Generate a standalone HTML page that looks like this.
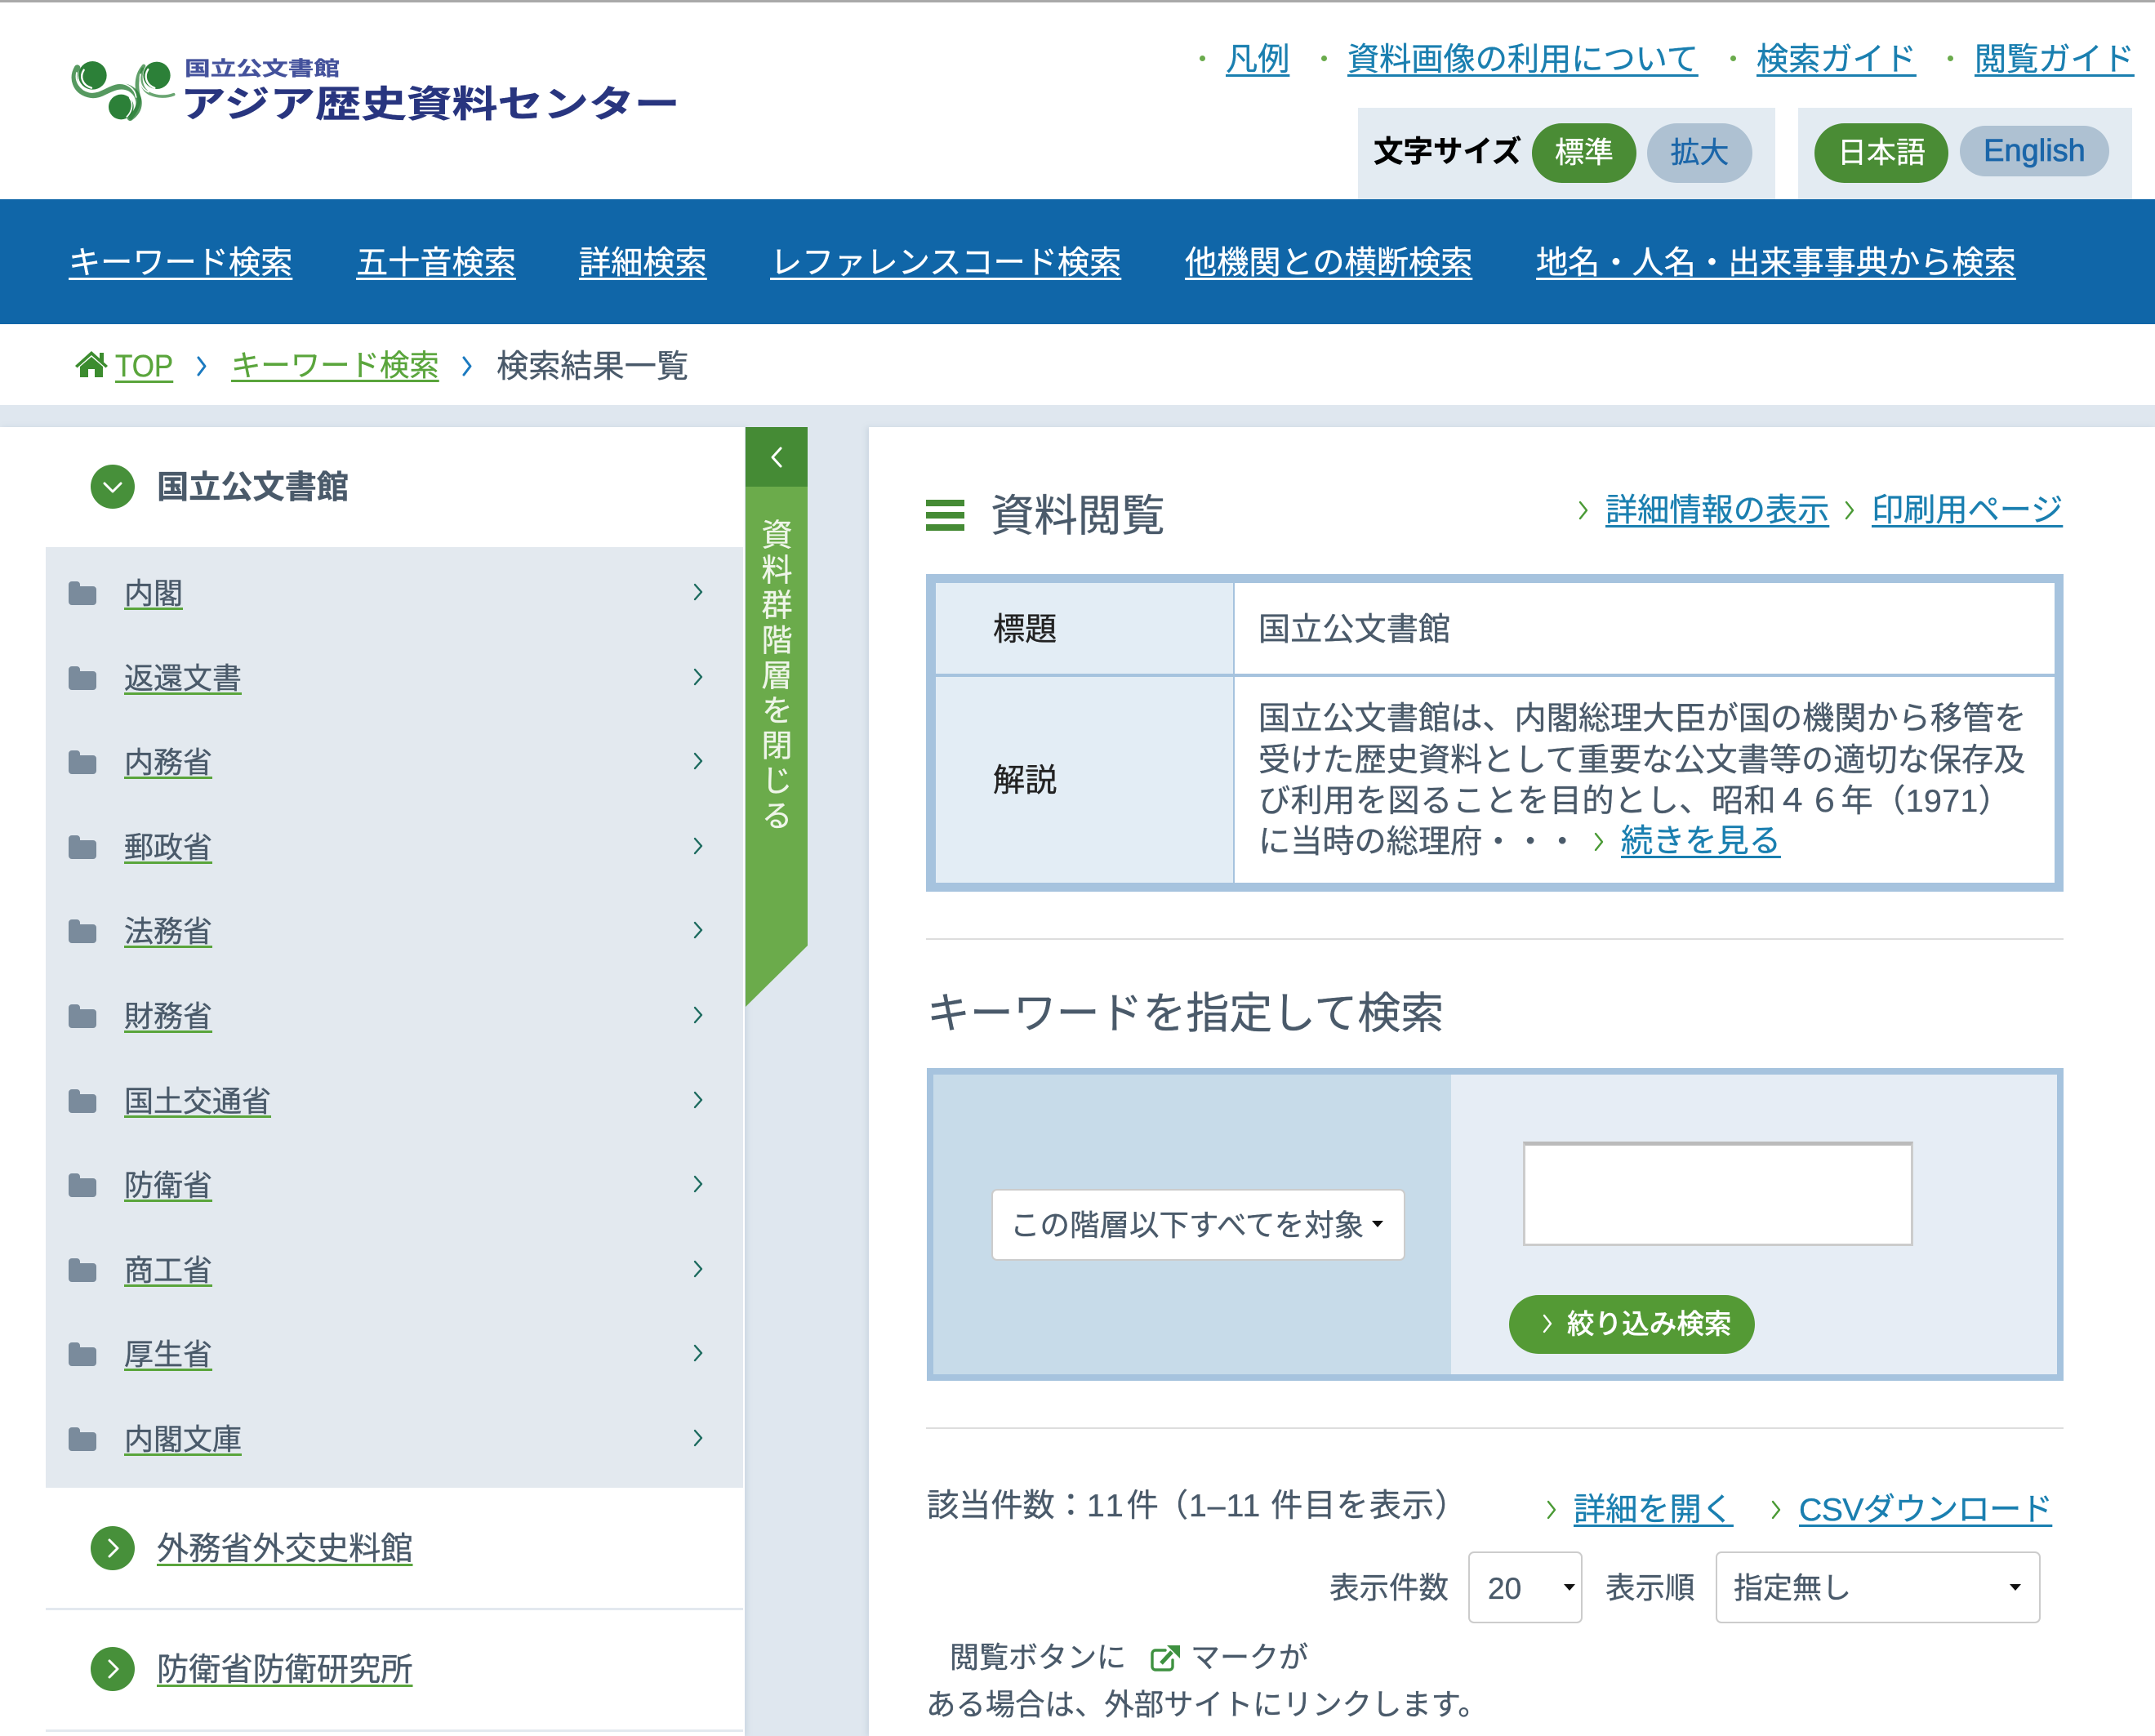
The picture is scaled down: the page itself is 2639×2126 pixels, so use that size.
<!DOCTYPE html>
<html lang="ja"><head><meta charset="utf-8"><title>アジア歴史資料センター</title>
<style>
*{box-sizing:border-box}
html,body{margin:0;padding:0}
body{position:relative;width:2639px;height:2126px;overflow:hidden;background:#dfe7ef;font-family:"Liberation Sans","Noto Sans CJK JP",sans-serif;color:#4a5a6a;-webkit-text-stroke:.35px}
.a,.t,svg{position:absolute}
.t{white-space:nowrap;line-height:1;font-size:39.2px}
a{color:inherit;text-decoration:underline;text-decoration-thickness:3px;text-underline-offset:5px;text-decoration-skip-ink:none}
.l{color:#1a7fb0}
.n{color:#fff;top:303px}
.g{text-decoration-color:#5aa53c}
.p{position:absolute;border-radius:37px;text-align:center;line-height:71px;font-size:36px}
.row{position:absolute;left:56px;width:854px;height:104px;top:calc(670px + var(--i)*103.6px)}
.row .t{left:96px;top:39px;font-size:36px}
.row svg{left:28px;top:41px}
.row svg+svg{left:793px;top:44px}
.c{fill:none;stroke-linecap:round;stroke-linejoin:round}
.sel{position:absolute;background:#fff;border:2px solid #ccc;border-radius:7px}
.car{position:absolute;width:0;height:0;border-left:7px solid transparent;border-right:7px solid transparent;border-top:8px solid #111}
</style></head><body>
<div class="a" style="left:0;top:0;width:2639px;height:3px;background:#a9a9a9"></div>
<div class="a" style="left:0;top:3px;width:2639px;height:241px;background:#fff"></div>

<svg style="left:80px;top:65px" width="150" height="90" viewBox="0 0 450 270">
<g fill="none" stroke="#2c8038" stroke-linecap="round">
<path d="M44 54C22 92 36 138 84 152C124 164 152 132 192 124C232 116 266 142 270 178C272 204 258 224 238 238" stroke-width="22" opacity=".8"/>
<path d="M288 48C258 82 260 128 272 170C268 198 256 218 240 238" stroke-width="14" opacity=".75"/>
<path d="M284 58C272 92 278 134 312 150C340 162 372 162 398 152" stroke-width="11" opacity=".7"/>
</g>
<g fill="none" stroke="#fff" stroke-linecap="round">
<path d="M42 72C34 104 56 136 88 143C126 150 152 118 192 112C226 108 256 130 260 162" stroke-width="5"/>
<path d="M276 78C270 106 280 132 306 143" stroke-width="5"/>
</g>
<circle cx="100" cy="82" r="52" fill="#2c8038"/>
<circle cx="336" cy="82" r="50" fill="#2c8038"/>
<circle cx="205" cy="198" r="46" fill="#2c8038"/>
<g fill="none" stroke="#fff" stroke-linecap="round">
<path d="M68 62C52 86 62 118 96 128" stroke-width="7"/>
<path d="M304 60C288 84 296 116 328 128" stroke-width="7"/>
<path d="M236 164C252 188 244 216 226 234" stroke-width="5"/>
</g>
</svg>
<div class="t" style="left:226px;top:73px;font-size:24px;font-weight:700;color:#44529c;transform:scaleX(1.32);transform-origin:left top">国立公文書館</div>
<div class="t" style="left:221px;top:105px;font-size:45px;font-weight:700;color:#28357f;transform:scaleX(1.24);transform-origin:left top">アジア歴史資料センター</div>

<div class="a" style="left:1469px;top:68px;width:7px;height:7px;border-radius:50%;background:#6aab4c"></div>
<div class="t" style="left:1501px;top:54px"><a class="l" href="#">凡例</a></div>
<div class="a" style="left:1618px;top:68px;width:7px;height:7px;border-radius:50%;background:#6aab4c"></div>
<div class="t" style="left:1650px;top:54px;font-size:39.2px"><a class="l" href="#">資料画像の利用について</a></div>
<div class="a" style="left:2119px;top:68px;width:7px;height:7px;border-radius:50%;background:#6aab4c"></div>
<div class="t" style="left:2151px;top:54px"><a class="l" href="#">検索ガイド</a></div>
<div class="a" style="left:2385px;top:68px;width:7px;height:7px;border-radius:50%;background:#6aab4c"></div>
<div class="t" style="left:2418px;top:54px"><a class="l" href="#">閲覧ガイド</a></div>

<div class="a" style="left:1663px;top:132px;width:511px;height:112px;background:#e3ebf2"></div>
<div class="a" style="left:2202px;top:132px;width:409px;height:112px;background:#e3ebf2"></div>
<div class="t" style="left:1682px;top:168px;font-size:36.5px;font-weight:700;color:#000">文字サイズ</div>
<div class="p" style="left:1876px;top:151px;width:128px;height:73px;background:#4a8c35;color:#fff">標準</div>
<div class="p" style="left:2017px;top:151px;width:129px;height:73px;background:#aec1d2;color:#1b66a9">拡大</div>
<div class="p" style="left:2222px;top:151px;width:164px;height:73px;background:#4a8c35;color:#fff">日本語</div>
<div class="p" style="left:2400px;top:154px;width:183px;height:62px;background:#aec1d2;color:#1b66a9;line-height:62px;font-size:38px;-webkit-text-stroke:.8px">English</div>

<div class="a" style="left:0;top:244px;width:2639px;height:153px;background:#1066a8"></div>
<div class="t n" style="left:84px"><a href="#">キーワード検索</a></div>
<div class="t n" style="left:436px"><a href="#">五十音検索</a></div>
<div class="t n" style="left:709px"><a href="#">詳細検索</a></div>
<div class="t n" style="left:943px"><a href="#">レファレンスコード検索</a></div>
<div class="t n" style="left:1451px"><a href="#">他機関との横断検索</a></div>
<div class="t n" style="left:1881px"><a href="#">地名・人名・出来事事典から検索</a></div>

<div class="a" style="left:0;top:397px;width:2639px;height:99px;background:#fff"></div>
<svg style="left:92px;top:429px" width="40" height="34" viewBox="0 0 40 34"><path d="M20 1L30 10V3H35V14.5L40 19L37.5 21.5L20 6L2.5 21.5L0 19Z" fill="#3c8c2f"/><path d="M6 20L20 8L34 20V33H24V23H16V33H6Z" fill="#3c8c2f"/></svg>
<div class="t" style="left:141px;top:430px;font-size:38px;color:#5aa53c;transform:scaleX(.92);transform-origin:left top"><a href="#">TOP</a></div>
<svg class="c" style="left:240px;top:435px" width="14" height="27" viewBox="0 0 14 27"><path d="M3 3L11 13.5L3 24" stroke="#1b7ac0" stroke-width="3"/></svg>
<div class="t" style="left:283px;top:430px;font-size:36.4px;color:#5aa53c"><a href="#">キーワード検索</a></div>
<svg class="c" style="left:565px;top:435px" width="14" height="27" viewBox="0 0 14 27"><path d="M3 3L11 13.5L3 24" stroke="#1b7ac0" stroke-width="3"/></svg>
<div class="t" style="left:608px;top:430px">検索結果一覧</div>

<div class="a" style="left:0;top:523px;width:912px;height:1603px;background:#fff;box-shadow:3px 0 6px rgba(150,170,190,.25)"></div>
<div class="a" style="left:1064px;top:523px;width:1575px;height:1603px;background:#fff;box-shadow:-3px 0 6px rgba(150,170,190,.25)"></div>

<div class="a" style="left:913px;top:523px;width:76px;height:710px;background:#6bab4b;clip-path:polygon(0 0,100% 0,100% 635px,0 100%)"></div>
<div class="a" style="left:913px;top:523px;width:76px;height:73px;background:#458b35"></div>
<svg class="c" style="left:940px;top:545px" width="22" height="30" viewBox="0 0 22 30"><path d="M16 4L6 15L16 26" stroke="#fff" stroke-width="3"/></svg>
<div class="a" style="left:928px;top:635px;font-size:38px;line-height:38px;letter-spacing:5px;writing-mode:vertical-rl;color:#eef5e8;white-space:nowrap">資料群階層を閉じる</div>

<svg style="left:111px;top:569px" width="54" height="54" viewBox="0 0 54 54"><circle cx="27" cy="27" r="27" fill="#47903a"/><path class="c" d="M17 23L27 33L37 23" stroke="#fff" stroke-width="3" style="position:static"/></svg>
<div class="t" style="left:192px;top:578px;font-weight:700">国立公文書館</div>

<div class="a" style="left:56px;top:670px;width:854px;height:1152px;background:#e3e9ef"></div>

<div class="row" style="--i:0"><svg width="34" height="30" viewBox="0 0 34 30"><path d="M0 5a4 4 0 0 1 4-4h6a4 4 0 0 1 4 4v2h16a4 4 0 0 1 4 4v15a4 4 0 0 1-4 4H4a4 4 0 0 1-4-4z" fill="#7a8b9c"/></svg><svg class="c" width="12" height="22" viewBox="0 0 12 22"><path d="M2 2L10 11L2 20" stroke="#1d6b5f" stroke-width="2.4"/></svg><div class="t"><a class="g" href="#">内閣</a></div></div>
<div class="row" style="--i:1"><svg width="34" height="30" viewBox="0 0 34 30"><path d="M0 5a4 4 0 0 1 4-4h6a4 4 0 0 1 4 4v2h16a4 4 0 0 1 4 4v15a4 4 0 0 1-4 4H4a4 4 0 0 1-4-4z" fill="#7a8b9c"/></svg><svg class="c" width="12" height="22" viewBox="0 0 12 22"><path d="M2 2L10 11L2 20" stroke="#1d6b5f" stroke-width="2.4"/></svg><div class="t"><a class="g" href="#">返還文書</a></div></div>
<div class="row" style="--i:2"><svg width="34" height="30" viewBox="0 0 34 30"><path d="M0 5a4 4 0 0 1 4-4h6a4 4 0 0 1 4 4v2h16a4 4 0 0 1 4 4v15a4 4 0 0 1-4 4H4a4 4 0 0 1-4-4z" fill="#7a8b9c"/></svg><svg class="c" width="12" height="22" viewBox="0 0 12 22"><path d="M2 2L10 11L2 20" stroke="#1d6b5f" stroke-width="2.4"/></svg><div class="t"><a class="g" href="#">内務省</a></div></div>
<div class="row" style="--i:3"><svg width="34" height="30" viewBox="0 0 34 30"><path d="M0 5a4 4 0 0 1 4-4h6a4 4 0 0 1 4 4v2h16a4 4 0 0 1 4 4v15a4 4 0 0 1-4 4H4a4 4 0 0 1-4-4z" fill="#7a8b9c"/></svg><svg class="c" width="12" height="22" viewBox="0 0 12 22"><path d="M2 2L10 11L2 20" stroke="#1d6b5f" stroke-width="2.4"/></svg><div class="t"><a class="g" href="#">郵政省</a></div></div>
<div class="row" style="--i:4"><svg width="34" height="30" viewBox="0 0 34 30"><path d="M0 5a4 4 0 0 1 4-4h6a4 4 0 0 1 4 4v2h16a4 4 0 0 1 4 4v15a4 4 0 0 1-4 4H4a4 4 0 0 1-4-4z" fill="#7a8b9c"/></svg><svg class="c" width="12" height="22" viewBox="0 0 12 22"><path d="M2 2L10 11L2 20" stroke="#1d6b5f" stroke-width="2.4"/></svg><div class="t"><a class="g" href="#">法務省</a></div></div>
<div class="row" style="--i:5"><svg width="34" height="30" viewBox="0 0 34 30"><path d="M0 5a4 4 0 0 1 4-4h6a4 4 0 0 1 4 4v2h16a4 4 0 0 1 4 4v15a4 4 0 0 1-4 4H4a4 4 0 0 1-4-4z" fill="#7a8b9c"/></svg><svg class="c" width="12" height="22" viewBox="0 0 12 22"><path d="M2 2L10 11L2 20" stroke="#1d6b5f" stroke-width="2.4"/></svg><div class="t"><a class="g" href="#">財務省</a></div></div>
<div class="row" style="--i:6"><svg width="34" height="30" viewBox="0 0 34 30"><path d="M0 5a4 4 0 0 1 4-4h6a4 4 0 0 1 4 4v2h16a4 4 0 0 1 4 4v15a4 4 0 0 1-4 4H4a4 4 0 0 1-4-4z" fill="#7a8b9c"/></svg><svg class="c" width="12" height="22" viewBox="0 0 12 22"><path d="M2 2L10 11L2 20" stroke="#1d6b5f" stroke-width="2.4"/></svg><div class="t"><a class="g" href="#">国土交通省</a></div></div>
<div class="row" style="--i:7"><svg width="34" height="30" viewBox="0 0 34 30"><path d="M0 5a4 4 0 0 1 4-4h6a4 4 0 0 1 4 4v2h16a4 4 0 0 1 4 4v15a4 4 0 0 1-4 4H4a4 4 0 0 1-4-4z" fill="#7a8b9c"/></svg><svg class="c" width="12" height="22" viewBox="0 0 12 22"><path d="M2 2L10 11L2 20" stroke="#1d6b5f" stroke-width="2.4"/></svg><div class="t"><a class="g" href="#">防衛省</a></div></div>
<div class="row" style="--i:8"><svg width="34" height="30" viewBox="0 0 34 30"><path d="M0 5a4 4 0 0 1 4-4h6a4 4 0 0 1 4 4v2h16a4 4 0 0 1 4 4v15a4 4 0 0 1-4 4H4a4 4 0 0 1-4-4z" fill="#7a8b9c"/></svg><svg class="c" width="12" height="22" viewBox="0 0 12 22"><path d="M2 2L10 11L2 20" stroke="#1d6b5f" stroke-width="2.4"/></svg><div class="t"><a class="g" href="#">商工省</a></div></div>
<div class="row" style="--i:9"><svg width="34" height="30" viewBox="0 0 34 30"><path d="M0 5a4 4 0 0 1 4-4h6a4 4 0 0 1 4 4v2h16a4 4 0 0 1 4 4v15a4 4 0 0 1-4 4H4a4 4 0 0 1-4-4z" fill="#7a8b9c"/></svg><svg class="c" width="12" height="22" viewBox="0 0 12 22"><path d="M2 2L10 11L2 20" stroke="#1d6b5f" stroke-width="2.4"/></svg><div class="t"><a class="g" href="#">厚生省</a></div></div>
<div class="row" style="--i:10"><svg width="34" height="30" viewBox="0 0 34 30"><path d="M0 5a4 4 0 0 1 4-4h6a4 4 0 0 1 4 4v2h16a4 4 0 0 1 4 4v15a4 4 0 0 1-4 4H4a4 4 0 0 1-4-4z" fill="#7a8b9c"/></svg><svg class="c" width="12" height="22" viewBox="0 0 12 22"><path d="M2 2L10 11L2 20" stroke="#1d6b5f" stroke-width="2.4"/></svg><div class="t"><a class="g" href="#">内閣文庫</a></div></div>

<svg style="left:111px;top:1869px" width="54" height="54" viewBox="0 0 54 54"><circle cx="27" cy="27" r="27" fill="#47903a"/><path d="M23 17L33 27L23 37" fill="none" stroke="#fff" stroke-width="3" stroke-linecap="round" stroke-linejoin="round"/></svg>
<div class="t" style="left:192px;top:1878px"><a class="g" href="#">外務省外交史料館</a></div>
<div class="a" style="left:56px;top:1969px;width:854px;height:3px;background:#e3e9ef"></div>
<svg style="left:111px;top:2017px" width="54" height="54" viewBox="0 0 54 54"><circle cx="27" cy="27" r="27" fill="#47903a"/><path d="M23 17L33 27L23 37" fill="none" stroke="#fff" stroke-width="3" stroke-linecap="round" stroke-linejoin="round"/></svg>
<div class="t" style="left:192px;top:2026px"><a class="g" href="#">防衛省防衛研究所</a></div>
<div class="a" style="left:56px;top:2118px;width:854px;height:3px;background:#e3e9ef"></div>

<div class="a" style="left:1134px;top:612px;width:47px;height:8px;background:#458b35"></div>
<div class="a" style="left:1134px;top:627px;width:47px;height:8px;background:#458b35"></div>
<div class="a" style="left:1134px;top:642px;width:47px;height:8px;background:#458b35"></div>
<div class="t" style="left:1213px;top:606px;font-size:53.4px">資料閲覧</div>
<svg class="c" style="left:1932px;top:612px" width="14" height="26" viewBox="0 0 14 26"><path d="M3 3L11 13L3 23" stroke="#4a9a35" stroke-width="2.4"/></svg>
<div class="t" style="left:1966px;top:606px"><a class="l" href="#">詳細情報の表示</a></div>
<svg class="c" style="left:2258px;top:612px" width="14" height="26" viewBox="0 0 14 26"><path d="M3 3L11 13L3 23" stroke="#4a9a35" stroke-width="2.4"/></svg>
<div class="t" style="left:2292px;top:606px"><a class="l" href="#">印刷用ページ</a></div>

<div class="a" style="left:1134px;top:703px;width:1393px;height:389px;background:#a6c3de"></div>
<div class="a" style="left:1146px;top:714px;width:364px;height:111px;background:#e3edf5"></div>
<div class="a" style="left:1512px;top:714px;width:1004px;height:111px;background:#fff"></div>
<div class="a" style="left:1146px;top:829px;width:364px;height:252px;background:#e3edf5"></div>
<div class="a" style="left:1512px;top:829px;width:1004px;height:252px;background:#fff"></div>
<div class="t" style="left:1216px;top:752px;color:#222">標題</div>
<div class="t" style="left:1541px;top:752px">国立公文書館</div>
<div class="t" style="left:1216px;top:937px;color:#222">解説</div>
<div class="t" style="left:1541px;top:861px">国立公文書館は、内閣総理大臣が国の機関から移管を</div>
<div class="t" style="left:1541px;top:912px">受けた歴史資料として重要な公文書等の適切な保存及</div>
<div class="t" style="left:1541px;top:962px;letter-spacing:.45px">び利用を図ることを目的とし、昭和４６年（1971）</div>
<div class="t" style="left:1541px;top:1012px">に当時の総理府・・・</div>
<svg class="c" style="left:1951px;top:1018px" width="14" height="26" viewBox="0 0 14 26"><path d="M3 3L11 13L3 23" stroke="#4a9a35" stroke-width="2.4"/></svg>
<div class="t" style="left:1985px;top:1011px"><a class="l" href="#">続きを見る</a></div>

<div class="a" style="left:1134px;top:1149px;width:1393px;height:2px;background:#ddd"></div>
<div class="t" style="left:1135px;top:1216px;font-size:52.9px">キーワードを指定して検索</div>

<div class="a" style="left:1135px;top:1308px;width:1392px;height:383px;background:#a6c3de"></div>
<div class="a" style="left:1143px;top:1316px;width:634px;height:367px;background:#c7dbe9"></div>
<div class="a" style="left:1777px;top:1316px;width:742px;height:367px;background:#e6edf5"></div>
<div class="sel" style="left:1214px;top:1456px;width:507px;height:88px"></div>
<div class="t" style="left:1237px;top:1483px;font-size:36.5px">この階層以下すべてを対象</div>
<div class="car" style="left:1680px;top:1495px"></div>
<div class="a" style="left:1865px;top:1398px;width:478px;height:128px;background:#fff;border:3px solid #ccc;border-top:5px solid #bbb"></div>
<div class="a" style="left:1848px;top:1586px;width:301px;height:72px;border-radius:36px;background:#549a35"></div>
<svg class="c" style="left:1888px;top:1608px" width="14" height="26" viewBox="0 0 14 26"><path d="M3 3L11 13L3 23" stroke="#fff" stroke-width="2.4"/></svg>
<div class="t" style="left:1919px;top:1606px;font-size:33.6px;color:#fff;font-weight:500">絞り込み検索</div>

<div class="a" style="left:1134px;top:1748px;width:1393px;height:2px;background:#ddd"></div>
<div class="t" style="left:1135px;top:1825px">該当件数：<span style="letter-spacing:4px">11件</span><span style="letter-spacing:1px;margin-left:-7px">（1–11 件目を表示）</span></div>
<svg class="c" style="left:1893px;top:1836px" width="14" height="26" viewBox="0 0 14 26"><path d="M3 3L11 13L3 23" stroke="#4a9a35" stroke-width="2.4"/></svg>
<div class="t" style="left:1927px;top:1830px"><a class="l" href="#">詳細を開く</a></div>
<svg class="c" style="left:2168px;top:1836px" width="14" height="26" viewBox="0 0 14 26"><path d="M3 3L11 13L3 23" stroke="#4a9a35" stroke-width="2.4"/></svg>
<div class="t" style="left:2203px;top:1830px;letter-spacing:-.6px"><a class="l" href="#">CSVダウンロード</a></div>

<div class="t" style="left:1628px;top:1927px;font-size:36.5px">表示件数</div>
<div class="sel" style="left:1798px;top:1900px;width:140px;height:88px"></div>
<div class="t" style="left:1822px;top:1927px;font-size:37px">20</div>
<div class="car" style="left:1915px;top:1940px"></div>
<div class="t" style="left:1966px;top:1927px;font-size:36.5px">表示順</div>
<div class="sel" style="left:2101px;top:1900px;width:398px;height:88px"></div>
<div class="t" style="left:2123px;top:1927px;font-size:36px">指定無し</div>
<div class="car" style="left:2461px;top:1940px"></div>

<div class="t" style="left:1163px;top:2012px;font-size:36px">閲覧ボタンに</div>
<svg style="left:1408px;top:2012px" width="38" height="36" viewBox="0 0 38 36"><path d="M19 9H7a4 4 0 0 0-4 4V29a4 4 0 0 0 4 4H24a4 4 0 0 0 4-4V21" fill="none" stroke="#3e9140" stroke-width="3.4" stroke-linecap="round"/><path d="M14 25L27 11" stroke="#3e9140" stroke-width="5" fill="none"/><path d="M21 3H37V19Z" fill="#3e9140"/></svg>
<div class="t" style="left:1458px;top:2012px;font-size:36px">マークが</div>
<div class="t" style="left:1134px;top:2070px;font-size:36.4px">ある場合は、外部サイトにリンクします。</div>
</body></html>
